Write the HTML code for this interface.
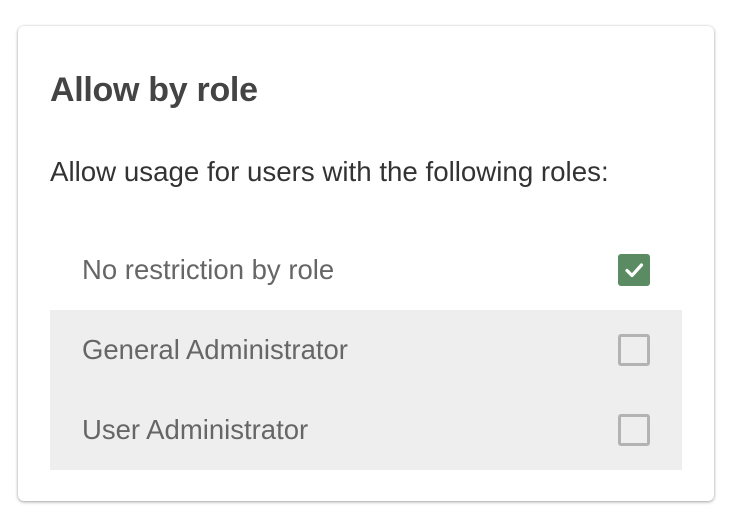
<!DOCTYPE html>
<html><head><style>
html,body{margin:0;padding:0;width:740px;height:530px;background:#fff;overflow:hidden;font-family:"Liberation Sans",Arial,sans-serif;}
.card{position:absolute;left:18px;top:26px;width:696px;height:475px;background:#fff;border-radius:6px;box-shadow:0 1px 3px rgba(0,0,0,0.35),0 0 2px rgba(0,0,0,0.08);}
h1{position:absolute;left:50px;top:71px;margin:0;font-size:34px;font-weight:bold;color:#444;letter-spacing:-0.3px;}
.desc{position:absolute;left:50px;top:156px;font-size:27.7px;color:#333;}
.row{position:absolute;left:50px;width:632px;height:80px;}
.row span{position:absolute;left:32px;top:24px;font-size:27.5px;color:#666;}
.gray{background:#eee;}
.cb{position:absolute;left:568px;top:24px;width:26px;height:26px;border:3px solid #b3b3b3;border-radius:3px;}
.cb.on{background:#5b8b62;border-color:#5b8b62;}
</style></head><body>
<div class="card"></div>
<h1>Allow by role</h1>
<div class="desc">Allow usage for users with the following roles:</div>
<div class="row" style="top:230px"><span>No restriction by role</span><div class="cb on"><svg width="26" height="26" viewBox="0 0 26 26" style="position:absolute;left:0;top:0"><path d="M6 13.5l5 5L20.5 8" fill="none" stroke="#fff" stroke-width="3.2" stroke-linecap="round" stroke-linejoin="round"/></svg></div></div>
<div class="row gray" style="top:310px"><span>General Administrator</span><div class="cb"></div></div>
<div class="row gray" style="top:390px"><span>User Administrator</span><div class="cb"></div></div>
</body></html>
